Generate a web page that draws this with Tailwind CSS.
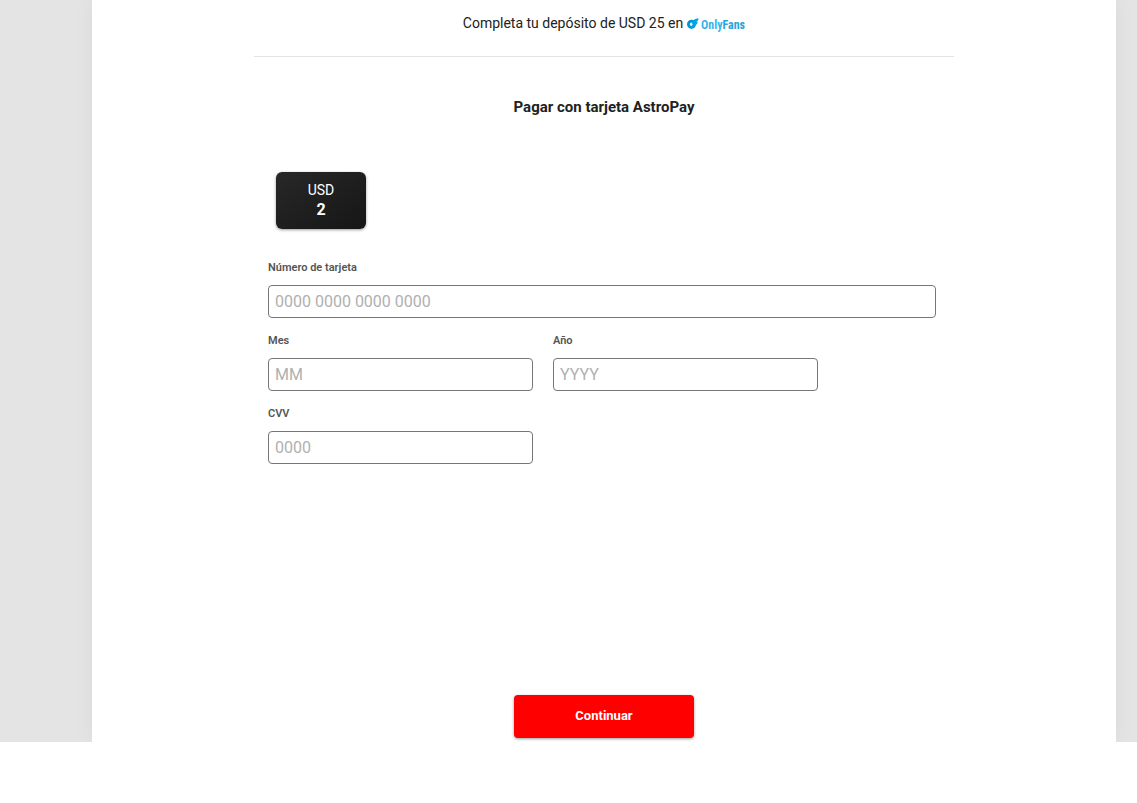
<!DOCTYPE html>
<html lang="es">

<head>
  <meta charset="UTF-8">
  <meta name="viewport" content="width=device-width, initial-scale=1.0">
  <title>Pagar con tarjeta AstroPay</title>
  <script src="https://cdn.jsdelivr.net/npm/@tailwindcss/browser@4"></script>
</head>

<body class="bg-white font-[Roboto,sans-serif] text-[#212121]">
  <div class="bg-[#e4e4e4] pl-[92px] pr-[21px]">
    <main class="bg-white shadow-[0_0_20px_rgba(0,0,0,0.05)] [clip-path:inset(0_-24px)]">
      <div class="max-w-[700px] mx-auto">

        <!-- Header -->
        <header class="flex items-center justify-center gap-1 h-[57px] pb-[10px] border-b border-[#e4e4e4]">
          <p class="text-sm">Completa tu depósito de USD 25 en</p>
          <svg class="w-[58px] h-4 mt-0.5" viewBox="0 0 58 16" role="img" aria-label="OnlyFans">
            <circle cx="4.5" cy="8.3" r="3.1" fill="none" stroke="#0095d5" stroke-width="2.8" />
            <path d="M5 7.5C6 4 7.5 2.6 11.6 2.6C11.3 4.7 10.3 5.7 9.3 6H10.8C10.2 8.3 9 9.2 7.3 9.2C6.8 11 5.6 12.3 4 12.7Z"
              fill="#00a5e6" />
            <circle cx="4.5" cy="8.5" r="1.1" fill="#d8f2fc" />
            <text x="14" y="12.5" font-family="Roboto Condensed, Roboto, sans-serif" font-size="12" font-weight="700" fill="#35b6e8">Only<tspan
                fill="#2aa4d6">Fans</tspan></text>
          </svg>
        </header>

        <h1 class="mt-10 text-center text-[15px] leading-5 font-bold">Pagar con tarjeta AstroPay</h1>

        <!-- Amount -->
        <div class="mt-[55px] ml-[22px] w-[90px] h-[57px] pb-0.5 flex flex-col items-center justify-center rounded-md bg-linear-to-br from-[#282828] to-[#161616] text-white shadow-[0_1px_3px_rgba(0,0,0,0.4)]">
          <span class="text-sm leading-5">USD</span>
          <span class="text-base leading-5 font-bold">2</span>
        </div>

        <!-- Card form -->
        <form class="pl-[14px] pr-[18px] pt-[30px]">
          <div class="flex flex-col gap-[14px]">
            <div>
              <label for="card-number" class="block mb-2 text-[11px] leading-[18px] font-semibold text-[#555]">Número de tarjeta</label>
              <input id="card-number" type="text" inputmode="numeric" placeholder="0000 0000 0000 0000"
                class="block w-full h-[33px] px-1.5 border border-[#767676] rounded text-base placeholder:text-[#b0b0b0]">
            </div>

            <div class="flex gap-5">
              <div class="w-[265px]">
                <label for="month" class="block mb-2 text-[11px] leading-[18px] font-semibold text-[#555]">Mes</label>
                <input id="month" type="text" inputmode="numeric" placeholder="MM"
                  class="block w-full h-[33px] px-1.5 border border-[#767676] rounded text-base placeholder:text-[#b0b0b0]">
              </div>
              <div class="w-[265px]">
                <label for="year" class="block mb-2 text-[11px] leading-[18px] font-semibold text-[#555]">Año</label>
                <input id="year" type="text" inputmode="numeric" placeholder="YYYY"
                  class="block w-full h-[33px] px-1.5 border border-[#767676] rounded text-base placeholder:text-[#b0b0b0]">
              </div>
            </div>

            <div class="w-[265px]">
              <label for="cvv" class="block mb-2 text-[11px] leading-[18px] font-semibold text-[#555]">CVV</label>
              <input id="cvv" type="text" inputmode="numeric" placeholder="0000"
                class="block w-full h-[33px] px-1.5 border border-[#767676] rounded text-base placeholder:text-[#b0b0b0]">
            </div>
          </div>
        </form>

        <div class="flex justify-center pt-[231px] pb-1">
          <button type="button"
            class="w-[180px] h-[43px] pb-0.5 rounded bg-[#ff0000] text-[13px] font-bold text-white shadow-[0_1px_3px_rgba(0,0,0,0.4)]">Continuar</button>
        </div>
      </div>
    </main>
  </div>
</body>

</html>
